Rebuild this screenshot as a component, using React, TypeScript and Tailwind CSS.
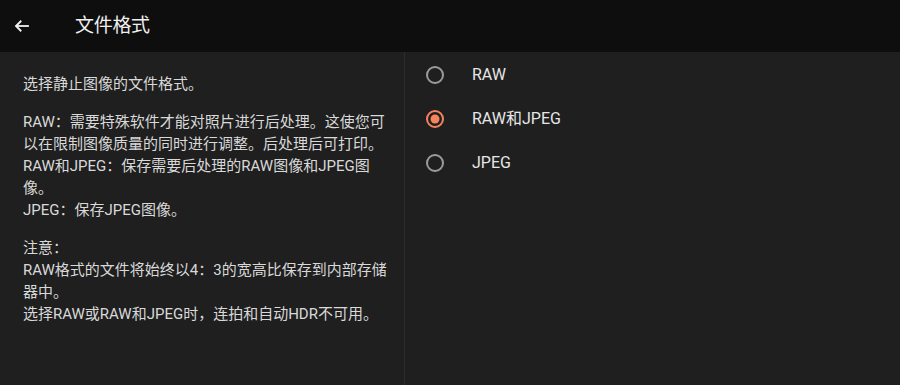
import React from "react";

const font = { fontFamily: "Roboto, 'Noto Sans CJK SC', sans-serif" };

function Radio({ checked }: { checked: boolean }) {
  return (
    <svg width="20" height="20" viewBox="0 0 20 20">
      <circle cx="10" cy="10" r="8" fill="none" stroke={checked ? "#f4845e" : "#9b9b9b"} strokeWidth="2" />
      {checked && <circle cx="10" cy="10" r="4.5" fill="#f4845e" />}
    </svg>
  );
}

export default function App() {
  const options = [
    { label: "RAW", checked: false },
    { label: "RAW和JPEG", checked: true },
    { label: "JPEG", checked: false },
  ];
  return (
    <div className="w-[900px] h-[385px] flex flex-col bg-[#1f1f1f] overflow-hidden" style={font}>
      <div className="h-[52px] bg-[#0e0e0e] flex items-center shrink-0">
        <div className="w-[75px] pl-[13px] flex items-center">
          <svg width="18" height="18" viewBox="0 0 24 24" fill="none" stroke="#f2f2f2" strokeWidth="2.4" strokeLinecap="square">
            <path d="M20 12H5" />
            <path d="M11 5l-7 7 7 7" strokeLinecap="butt" />
          </svg>
        </div>
        <div className="text-[19px] text-[#f0f0f0] tracking-[-0.3px] pt-[1px]">文件格式</div>
      </div>
      <div className="flex flex-1">
        <div className="w-[405px] border-r border-[#2c2c2c] pl-[23px] pt-[21px] text-[15px] leading-[22px] text-[#d9d9d9] whitespace-nowrap">
          <div>选择静止图像的文件格式。</div>
          <div className="mt-[16px]">
            <div>RAW：需要特殊软件才能对照片进行后处理。这使您可</div>
            <div>以在限制图像质量的同时进行调整。后处理后可打印。</div>
            <div>RAW和JPEG：保存需要后处理的RAW图像和JPEG图</div>
            <div>像。</div>
            <div>JPEG：保存JPEG图像。</div>
          </div>
          <div className="mt-[16px]">
            <div>注意：</div>
            <div>RAW格式的文件将始终以4：3的宽高比保存到内部存储</div>
            <div>器中。</div>
            <div>选择RAW或RAW和JPEG时，连拍和自动HDR不可用。</div>
          </div>
        </div>
        <div className="flex-1 flex flex-col">
          {options.map((o) => (
            <div key={o.label} className="h-[44px] flex items-center pl-[20px] pt-[1px]">
              <Radio checked={o.checked} />
              <span className="ml-[27px] text-[16px] text-[#e6e6e6]">{o.label}</span>
            </div>
          ))}
        </div>
      </div>
    </div>
  );
}
